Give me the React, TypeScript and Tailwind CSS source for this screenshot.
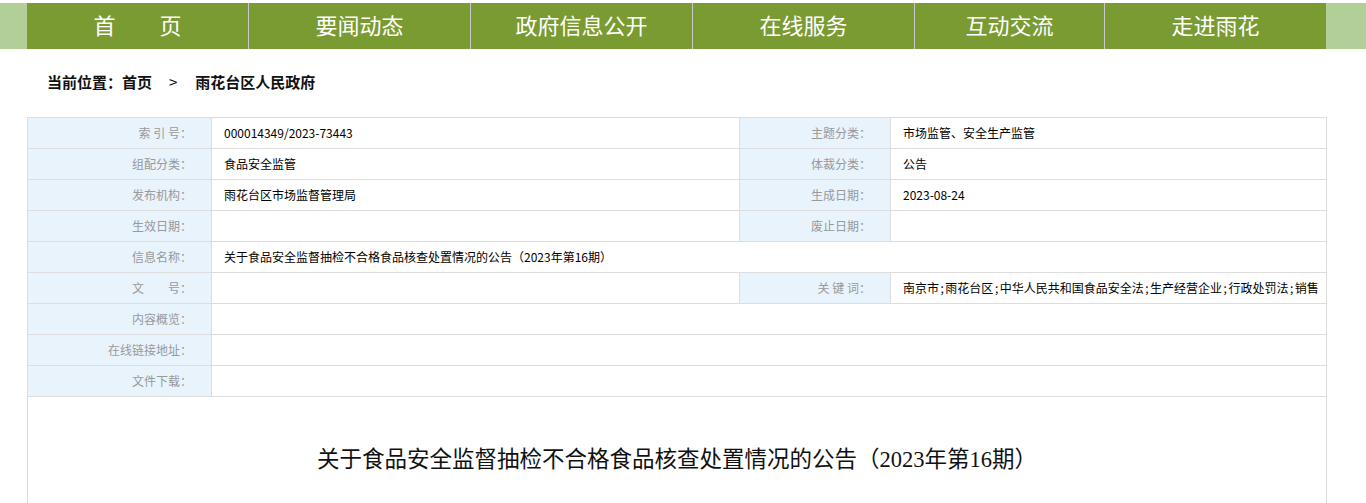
import React from 'react';

const navItems = [
  { label: '首\u3000\u3000页', w: 'w-[221px]' },
  { label: '要闻动态', w: 'w-[222px]' },
  { label: '政府信息公开', w: 'w-[222px]' },
  { label: '在线服务', w: 'w-[222px]' },
  { label: '互动交流', w: 'w-[190px]' },
  { label: '走进雨花', w: 'w-[222px]' },
];

const cjk = "font-['Noto_Sans_CJK_SC',sans-serif]";

const keywords = ['南京市', '雨花台区', '中华人民共和国食品安全法', '生产经营企业', '行政处罚法', '销售'];

function Label({ children }: { children: React.ReactNode }) {
  return (
    <td className="bg-[#e8f3fc] border border-[#dddddd] text-right pr-[19px] text-[#999999] text-[12px] h-[31px] whitespace-pre">
      {children}
    </td>
  );
}

function Value({ children, span }: { children?: React.ReactNode; span?: number }) {
  return (
    <td colSpan={span} className="border border-[#dddddd] pl-[12px] text-[#000000] text-[12px] h-[31px] whitespace-nowrap overflow-hidden">
      {children}
    </td>
  );
}

export default function App() {
  return (
    <div className={`w-[1366px] bg-white ${cjk}`}>
      <div className="pt-[3px]">
        <div className="flex h-[46px] bg-[#b1cf96]">
          <div className="w-[27px]" />
          <div className="flex bg-[#7a9b32]">
            {navItems.map((item, i) => (
              <div
                key={item.label}
                className={`${item.w} flex items-center justify-center pb-[3px] text-white text-[22px] ${i > 0 ? 'border-l border-[#c8c8c8]' : ''}`}
              >
                {item.label}
              </div>
            ))}
          </div>
        </div>
      </div>

      <div className="pl-[47px] pt-[22px] h-[68px] text-[15px] font-bold text-[#111111] flex items-start">
        <span>当前位置：首页</span>
        <span className="ml-[17px] mr-[18px] font-normal">&gt;</span>
        <span>雨花台区人民政府</span>
      </div>

      <div className="ml-[27px] w-[1300px]">
        <table className="w-[1300px] border-collapse table-fixed">
          <colgroup>
            <col className="w-[184px]" />
            <col className="w-[528px]" />
            <col className="w-[151px]" />
            <col />
          </colgroup>
          <tbody>
            <tr>
              <Label>{'索 引 号：'}</Label>
              <Value>000014349/2023-73443</Value>
              <Label>主题分类：</Label>
              <Value>市场监管、安全生产监管</Value>
            </tr>
            <tr>
              <Label>组配分类：</Label>
              <Value>食品安全监管</Value>
              <Label>体裁分类：</Label>
              <Value>公告</Value>
            </tr>
            <tr>
              <Label>发布机构：</Label>
              <Value>雨花台区市场监督管理局</Value>
              <Label>生成日期：</Label>
              <Value>2023-08-24</Value>
            </tr>
            <tr>
              <Label>生效日期：</Label>
              <Value />
              <Label>废止日期：</Label>
              <Value />
            </tr>
            <tr>
              <Label>信息名称：</Label>
              <Value span={3}>关于食品安全监督抽检不合格食品核查处置情况的公告（2023年第16期）</Value>
            </tr>
            <tr>
              <Label>{'文　　号：'}</Label>
              <Value />
              <Label>{'关 键 词：'}</Label>
              <Value>
                {keywords.map((k, i) => (
                  <React.Fragment key={k}>
                    {i > 0 && <span className="mx-[1.5px]">;</span>}
                    {k}
                  </React.Fragment>
                ))}
              </Value>
            </tr>
            <tr>
              <Label>内容概览：</Label>
              <Value span={3} />
            </tr>
            <tr>
              <Label>在线链接地址：</Label>
              <Value span={3} />
            </tr>
            <tr>
              <Label>文件下载：</Label>
              <Value span={3} />
            </tr>
          </tbody>
        </table>
        <div className="border-x border-[#dddddd] h-[120px] pt-[48px] flex justify-center">
          <h1 className="text-[22.5px] text-[#111111] font-['Liberation_Serif','Noto_Sans_CJK_SC',serif] leading-[30px]">
            关于食品安全监督抽检不合格食品核查处置情况的公告（2023年第16期）
          </h1>
        </div>
      </div>
    </div>
  );
}
